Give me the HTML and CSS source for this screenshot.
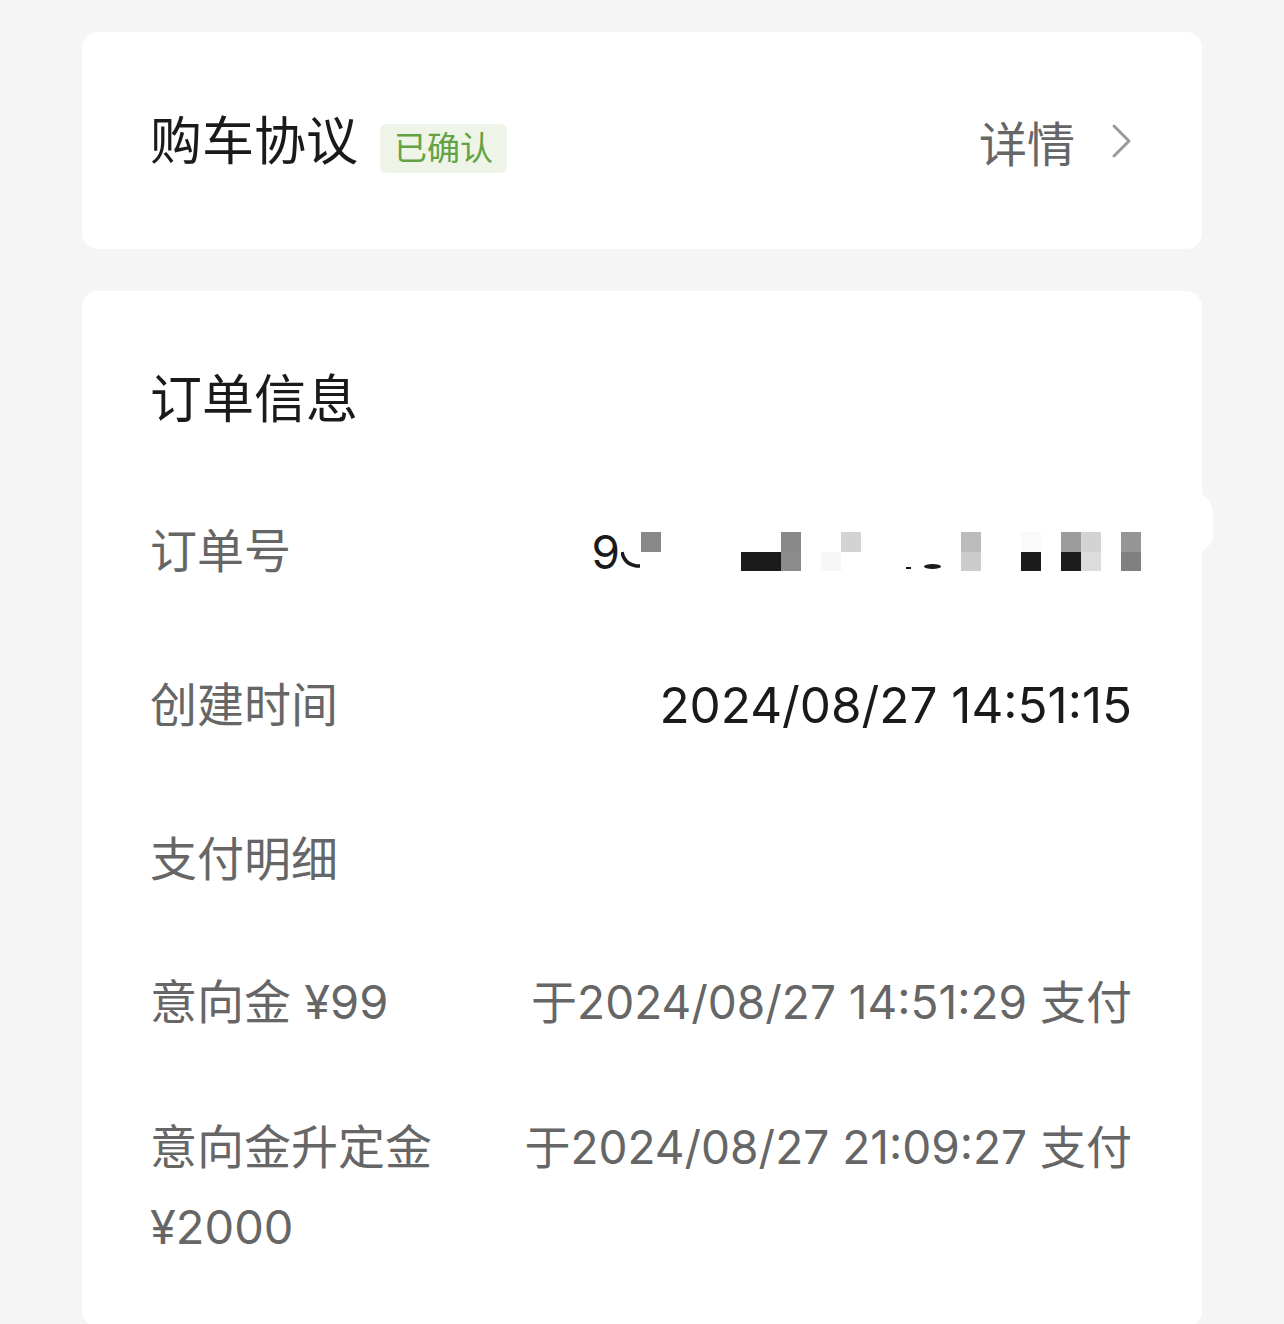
FILE: index.html
```html
<!DOCTYPE html>
<html lang="zh-CN">

<head>
    <meta charset="UTF-8">
    <meta name="viewport" content="width=device-width, initial-scale=1.0">
    <title>订单详情</title>
    <link rel="stylesheet" href="styles.css">
</head>

<body>
    <div class="page">
        <div class="card agreement">
            <div class="agreement-title">
                <span class="title">购车协议</span>
                <span class="badge">已确认</span>
            </div>
            <div class="more">
                <span>详情</span>
                <svg class="chevron" width="22" height="36" viewBox="0 0 22 36">
                    <path d="M3 3 L18 18 L3 33" fill="none" stroke="#9a9a9a" stroke-width="3" stroke-linecap="round" stroke-linejoin="round"/>
                </svg>
            </div>
        </div>

        <div class="card order">
            <div class="edge-tab"></div>
            <div class="title">订单信息</div>

            <div class="row first">
                <span class="label">订单号</span>
                <div class="order-no">
                    <span class="digit">9</span>
                    <svg class="cut" width="20" height="20" viewBox="0 0 20 20">
                        <path d="M1 2 C3 12 9 16 19 16" fill="none" stroke="#1a1a1a" stroke-width="3.5"/>
                    </svg>
                    <div class="mosaic">
                        <div style="grid-area: 1 / 1; background: #888;"></div>
                        <div style="grid-area: 2 / 6; background: #1a1a1a;"></div>
                        <div style="grid-area: 2 / 7; background: #1a1a1a;"></div>
                        <div style="grid-area: 1 / 8; background: #888;"></div>
                        <div style="grid-area: 2 / 8; background: #8c8c8c;"></div>
                        <div style="grid-area: 2 / 10; background: #f6f6f6;"></div>
                        <div style="grid-area: 1 / 11; background: #d3d3d3;"></div>
                        <div class="ink" style="grid-area: 2 / 14;"><i class="dot"></i></div>
                        <div class="ink" style="grid-area: 2 / 15;"><i class="blob"></i></div>
                        <div style="grid-area: 1 / 17; background: #bbb;"></div>
                        <div style="grid-area: 2 / 17; background: #ccc;"></div>
                        <div style="grid-area: 1 / 20; background: #fafafa;"></div>
                        <div style="grid-area: 2 / 20; background: #1b1b1b;"></div>
                        <div style="grid-area: 1 / 22; background: #9c9c9c;"></div>
                        <div style="grid-area: 2 / 22; background: #1c1c1c;"></div>
                        <div style="grid-area: 1 / 23; background: #d3d3d3;"></div>
                        <div style="grid-area: 2 / 23; background: #dcdcdc;"></div>
                        <div style="grid-area: 1 / 25; background: #959595;"></div>
                        <div style="grid-area: 2 / 25; background: #808080;"></div>
                    </div>
                </div>
            </div>

            <div class="row">
                <span class="label">创建时间</span>
                <span class="value date">2024/08/27 14:51:15</span>
            </div>

            <div class="row">
                <span class="label">支付明细</span>
            </div>

            <div class="row pay">
                <span class="label">意向金 ¥99</span>
                <span class="value muted">于2024/08/27 14:51:29 支付</span>
            </div>

            <div class="row pay">
                <span class="label">意向金升定金 ¥2000</span>
                <span class="value muted">于2024/08/27 21:09:27 支付</span>
            </div>
        </div>
    </div>
</body>

</html>
```

FILE: styles.css
```css
body {
    margin: 0;
    font-family: Inter, "Noto Sans CJK SC", sans-serif;
    background-color: #f5f5f5;
    color: #1a1a1a;
}

.page {
    padding: 32px 82px 0;
}

.card {
    background-color: #fff;
    border-radius: 16px;
}

/* 购车协议 */
.agreement {
    height: 217px;
    display: flex;
    align-items: center;
    justify-content: space-between;
    padding: 0 69px 0 68px;
    margin-bottom: 42px;
}

.agreement-title {
    display: flex;
    align-items: center;
}

.title {
    font-size: 52px;
    line-height: 72px;
    color: #1a1a1a;
}

.agreement .title {
    margin-top: 3px;
}

.badge {
    margin-left: 22px;
    margin-top: 15px;
    padding: 0 14px;
    height: 49px;
    line-height: 49px;
    font-size: 33px;
    color: #64a243;
    background-color: #eef5e8;
    border-radius: 6px;
}

.more {
    display: flex;
    align-items: center;
    font-size: 48px;
    color: #666;
}

.chevron {
    margin-left: 36px;
}

/* 订单信息 */
.order {
    position: relative;
    padding: 73px 70px 60px 68px;
}

.edge-tab {
    position: absolute;
    right: -11px;
    top: 200px;
    width: 44px;
    height: 64px;
    border-radius: 32px;
    background-color: #fff;
}

.row {
    display: flex;
    justify-content: space-between;
    align-items: flex-start;
    line-height: 80px;
    margin-top: 74px;
}

.row.first {
    margin-top: 75px;
}

.row.pay {
    margin-top: 63px;
}

.row.pay + .row.pay {
    margin-top: 65px;
}

.label {
    flex: 1;
    font-size: 47px;
    color: #666;
    margin-right: 30px;
}

.value {
    flex-shrink: 0;
    white-space: nowrap;
    font-size: 46px;
    color: #1a1a1a;
}

.value.date {
    font-size: 49.4px;
}

.value.muted {
    color: #666;
}

.order-no {
    display: flex;
    align-items: flex-end;
    height: 80px;
    padding-bottom: 20px;
    box-sizing: border-box;
    margin-right: -9px;
}

.digit {
    font-size: 46px;
    line-height: 38px;
    margin-right: 1px;
}

.cut {
    margin-bottom: 1px;
}

.mosaic {
    display: grid;
    grid-template-columns: repeat(25, 20px);
    grid-template-rows: 20px 19px;
}

.ink {
    display: flex;
    align-items: flex-end;
    padding-bottom: 2px;
}

.dot {
    width: 5px;
    height: 2px;
    margin-left: 5px;
    background-color: #1a1a1a;
}

.blob {
    width: 17px;
    height: 5px;
    margin-left: 3px;
    border-radius: 50%;
    background-color: #1a1a1a;
}
```
